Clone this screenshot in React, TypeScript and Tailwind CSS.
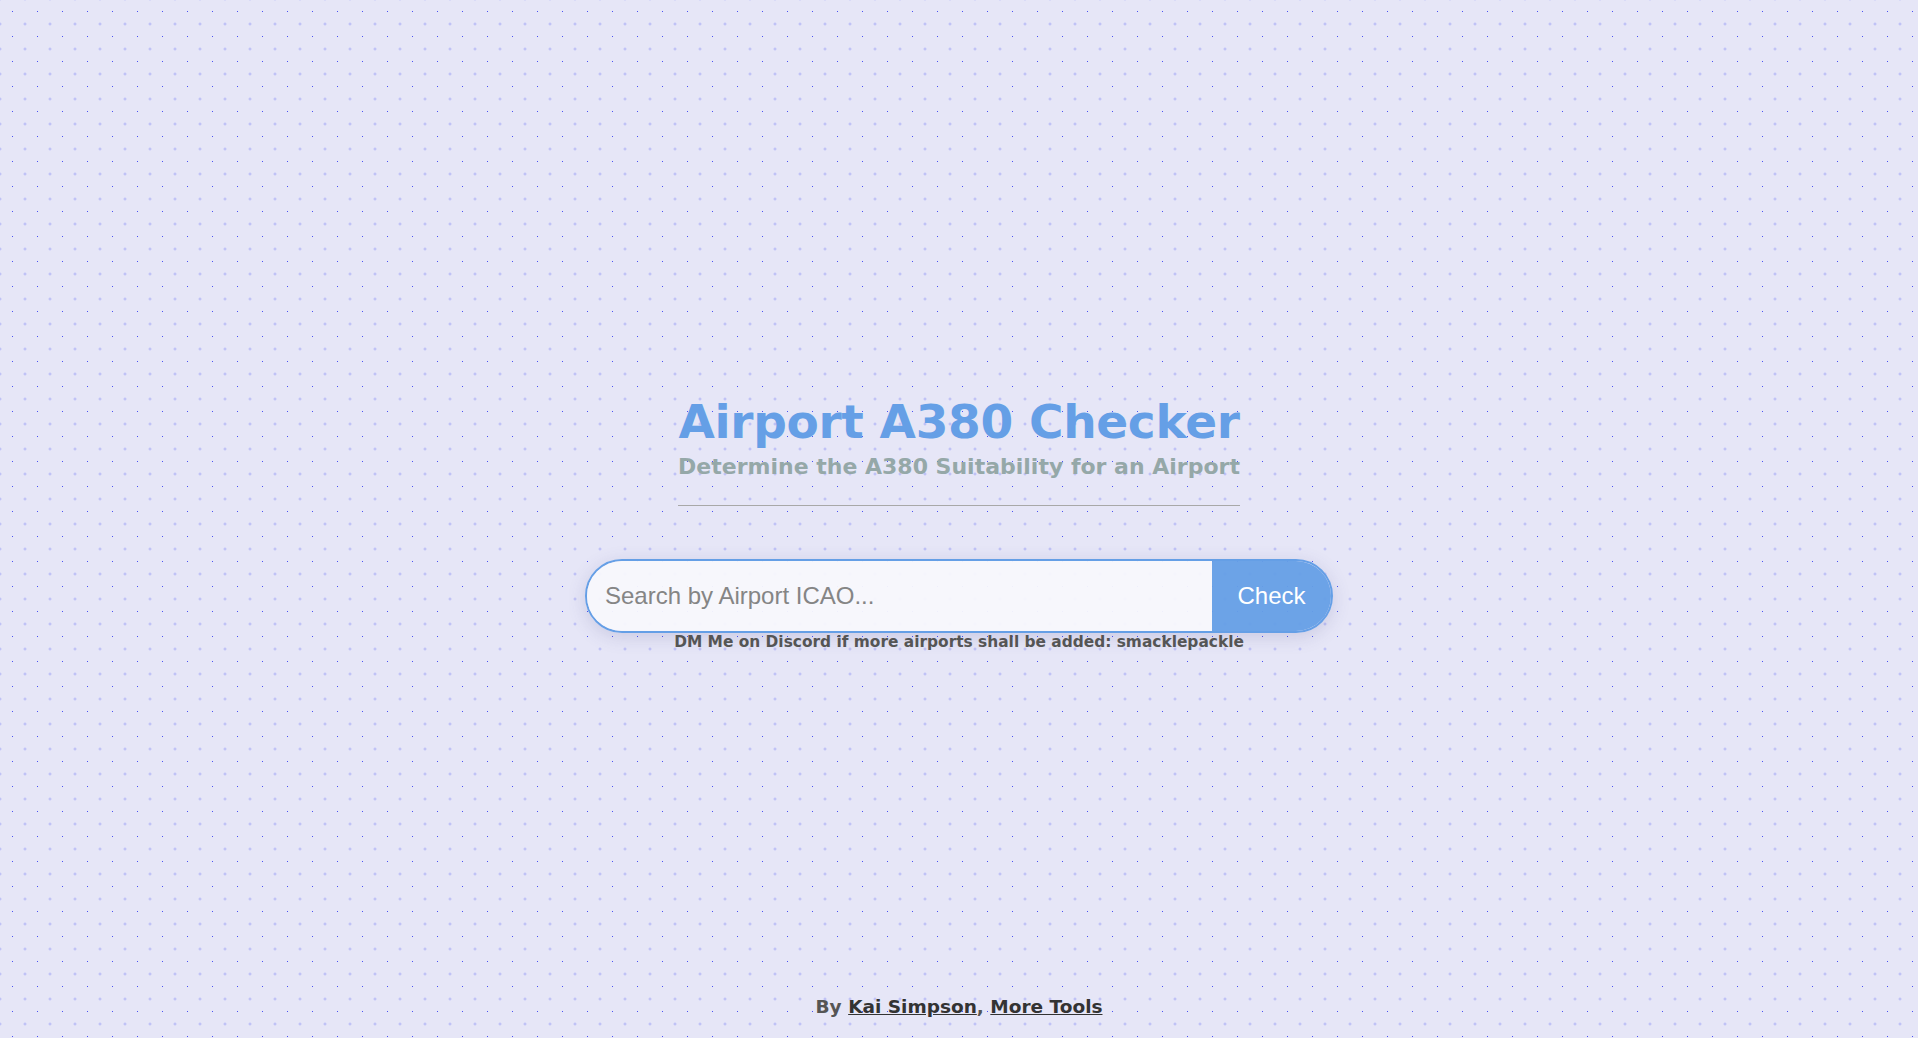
import React from 'react';

const dots =
  'bg-[radial-gradient(circle_at_12.5px_11.5px,#4a51f5_0.7px,transparent_0.8px),radial-gradient(circle_at_12.5px_12.5px,#b3b6f6_1.1px,transparent_1.3px)] bg-size-[25px_25px] bg-position-[0_0,12.5px_11.5px]';

export default function App() {
  return (
    <div className={`h-screen w-full flex flex-col bg-[#e6e6f7] ${dots}`}>
      <main className="flex flex-col items-center pt-[394px]">
        <div className="flex flex-col items-stretch w-fit font-['DejaVu_Sans',sans-serif] font-bold">
          <h1 className="text-[47px] leading-[56px] text-[#659fe6] tracking-[-0.3px] text-center">
            Airport A380 Checker
          </h1>
          <h2 className="mt-[3px] text-[22px] leading-[28px] text-[#95a8a8] text-center">
            Determine the A380 Suitability for an Airport
          </h2>
          <div className="mt-[24px] h-px bg-[#a8a8a8]" />
        </div>

        <div className="mt-[53px] w-[748px] h-[74px] flex rounded-full border-2 border-[#659fe6] overflow-hidden shadow-[0_4px_18px_rgba(80,80,140,0.18)]">
          <input
            type="text"
            placeholder="Search by Airport ICAO..."
            className="flex-1 min-w-0 bg-[#f8f8fc]/95 px-[18px] text-[24px] text-[#333] placeholder:text-[#858585] font-['Liberation_Sans',Arial,sans-serif] outline-none"
          />
          <button className="w-[119px] bg-[#659fe6]/95 text-white text-[24px] font-['Liberation_Sans',Arial,sans-serif]">
            Check
          </button>
        </div>

        <p className="text-[15.4px] leading-[19px] font-bold text-[#555] font-['DejaVu_Sans',sans-serif]">
          DM Me on Discord if more airports shall be added: smacklepackle
        </p>
      </main>

      <footer className="mt-auto pb-[18px] text-center font-['DejaVu_Sans',sans-serif] font-bold text-[18.5px] leading-[26px] text-[#555]">
        By{' '}
        <a href="#" className="underline text-[#333]">
          Kai Simpson
        </a>
        ,{' '}
        <a href="#" className="underline text-[#333]">
          More Tools
        </a>
      </footer>
    </div>
  );
}
